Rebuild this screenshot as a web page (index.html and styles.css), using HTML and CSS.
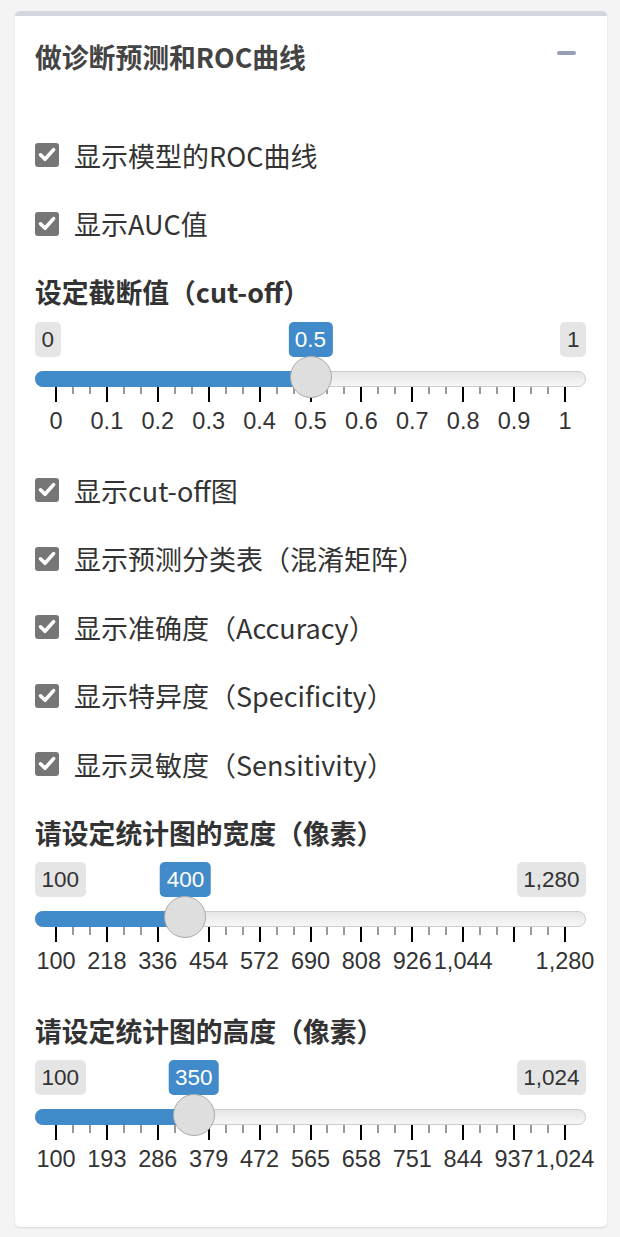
FILE: index.html
```html
<!DOCTYPE html>
<html lang="zh-CN">
<head>
    <meta charset="UTF-8">
    <meta name="viewport" content="width=device-width, initial-scale=1.0">
    <title>做诊断预测和ROC曲线</title>
    <link rel="stylesheet" href="styles.css">
</head>
<body>
    <div class="box">
        <div class="box-header">
            <h3 class="box-title">做诊断预测和ROC曲线</h3>
            <span class="collapse-btn"></span>
        </div>

        <div class="box-body">
            <label class="check"><span class="cb"><svg viewBox="0 0 24 24"><path d="M5.5 11.8 L10 16.3 L18.6 6.6"/></svg></span>显示模型的ROC曲线</label>
            <label class="check"><span class="cb"><svg viewBox="0 0 24 24"><path d="M5.5 11.8 L10 16.3 L18.6 6.6"/></svg></span>显示AUC值</label>

            <div class="field-label">设定截断值（cut-off）</div>
            <div class="irs" data-min="0" data-max="1" data-value="0.5" data-from="0.5" data-lo="0" data-hi="1"
                 data-grid="0|0.1|0.2|0.3|0.4|0.5|0.6|0.7|0.8|0.9|1"></div>

            <label class="check"><span class="cb"><svg viewBox="0 0 24 24"><path d="M5.5 11.8 L10 16.3 L18.6 6.6"/></svg></span>显示cut-off图</label>
            <label class="check"><span class="cb"><svg viewBox="0 0 24 24"><path d="M5.5 11.8 L10 16.3 L18.6 6.6"/></svg></span>显示预测分类表（混淆矩阵）</label>
            <label class="check"><span class="cb"><svg viewBox="0 0 24 24"><path d="M5.5 11.8 L10 16.3 L18.6 6.6"/></svg></span>显示准确度（Accuracy）</label>
            <label class="check"><span class="cb"><svg viewBox="0 0 24 24"><path d="M5.5 11.8 L10 16.3 L18.6 6.6"/></svg></span>显示特异度（Specificity）</label>
            <label class="check"><span class="cb"><svg viewBox="0 0 24 24"><path d="M5.5 11.8 L10 16.3 L18.6 6.6"/></svg></span>显示灵敏度（Sensitivity）</label>

            <div class="field-label">请设定统计图的宽度（像素）</div>
            <div class="irs" data-min="100" data-max="1280" data-value="400" data-from="400" data-lo="100" data-hi="1,280"
                 data-grid="100|218|336|454|572|690|808|926|1,044||1,280"></div>

            <div class="field-label">请设定统计图的高度（像素）</div>
            <div class="irs last" data-min="100" data-max="1024" data-value="350" data-from="350" data-lo="100" data-hi="1,024"
                 data-grid="100|193|286|379|472|565|658|751|844|937|1,024"></div>
        </div>
    </div>

    <script>
        // build the ion.rangeSlider-like markup from data attributes
        function buildSlider(el) {
            const min = +el.dataset.min;
            const max = +el.dataset.max;
            const p = (+el.dataset.value - min) / (max - min);
            const labels = el.dataset.grid.split('|');
            const pos = `calc(${p} * (100% - 42px) + 21px)`;

            let html = '';
            html += `<div class="irs-labels"><span class="irs-min">${el.dataset.lo}</span><span class="irs-max">${el.dataset.hi}</span>`;
            html += `<span class="irs-single" style="left: ${pos}">${el.dataset.from}</span></div>`;
            html += `<div class="irs-track"><div class="irs-line"></div>`;
            html += `<div class="irs-bar" style="width: ${pos}"></div>`;
            html += `<div class="irs-handle" style="left: calc(${p} * (100% - 42px))"></div></div>`;

            html += '<div class="irs-grid">';
            const step = 100 / (labels.length - 1);
            labels.forEach((text, i) => {
                const left = i * step;
                html += `<span class="irs-pol" style="left: ${left}%"></span>`;
                if (i > 0) {
                    for (let k = 1; k <= 2; k++) {
                        html += `<span class="irs-pol small" style="left: ${left - step * k / 3}%"></span>`;
                    }
                }
                if (text) {
                    html += `<span class="irs-text" style="left: ${left}%">${text}</span>`;
                }
            });
            html += '</div>';

            el.innerHTML = html;
        }

        document.querySelectorAll('.irs').forEach(buildSlider);
    </script>
</body>
</html>
```

FILE: styles.css
```css
* {
    box-sizing: border-box;
}

body {
    margin: 0;
    background: #f4f4f4;
    font-family: "Noto Sans CJK SC", "Noto Sans", sans-serif;
    color: #333;
}

.box {
    margin: 11px 13px 10px 15px;
    background: #fff;
    border-top: 5px solid #d2d6de;
    border-radius: 5px;
    box-shadow: 0 1px 2px rgba(0, 0, 0, 0.12);
}

.box-header {
    display: flex;
    align-items: center;
    justify-content: space-between;
    padding: 22px 31px 0 20px;
}

.box-title {
    margin: 0;
    font-size: 26.8px;
    font-weight: bold;
    line-height: 38px;
    color: #444;
}

.collapse-btn {
    width: 19px;
    height: 4px;
    margin-top: -8px;
    background: #97a0b3;
    border-radius: 2px;
}

.box-body {
    display: flex;
    flex-direction: column;
    padding: 60px 21px 57px 20px;
}

.check {
    display: flex;
    align-items: center;
    gap: 15px;
    height: 38px;
    margin-bottom: 30.5px;
    font-size: 27px;
}

.cb {
    width: 24px;
    height: 24px;
    background: #767676;
    border-radius: 3px;
    flex-shrink: 0;
}

.cb svg {
    display: block;
    width: 24px;
    height: 24px;
}

.cb path {
    fill: none;
    stroke: #fff;
    stroke-width: 3.6;
    stroke-linecap: round;
    stroke-linejoin: round;
}

.field-label {
    height: 38px;
    line-height: 38px;
    margin-bottom: 10.5px;
    font-size: 26.8px;
    font-weight: bold;
}

/* slider */
.irs {
    position: relative;
    height: 110px;
    margin-bottom: 39.5px;
    font-family: "Liberation Sans", Arial, sans-serif;
}

.irs.last {
    margin-bottom: 0;
}

.irs-labels {
    display: flex;
    justify-content: space-between;
    height: 35px;
}

.irs-min, .irs-max, .irs-single {
    font-size: 22.5px;
    line-height: 35px;
    padding: 0 6.5px;
    border-radius: 5px;
    white-space: nowrap;
}

.irs-min, .irs-max {
    background: rgba(0, 0, 0, 0.1);
    color: #333;
}

.irs-single {
    position: absolute;
    top: 0;
    transform: translateX(-50%);
    background: #428bca;
    color: #fff;
}

.irs-track {
    position: relative;
    height: 16px;
    margin-top: 14px;
}

.irs-line {
    height: 100%;
    border: 1px solid #ccc;
    border-radius: 8px;
    background: linear-gradient(to bottom, #dedede -50%, #fff 150%);
}

.irs-bar {
    position: absolute;
    left: 0;
    top: 0;
    height: 100%;
    background: #428bca;
    border-radius: 8px 0 0 8px;
}

.irs-handle {
    position: absolute;
    top: -15px;
    z-index: 2;
    width: 42px;
    height: 42px;
    border: 1.5px solid #ababab;
    background: #dedede;
    border-radius: 50%;
}

.irs-grid {
    position: relative;
    height: 45px;
    margin: 0 21px;
}

.irs-pol {
    position: absolute;
    top: 0;
    width: 2px;
    height: 15px;
    margin-left: -1px;
    background: #000;
}

.irs-pol.small {
    height: 7.5px;
    background: #999;
}

.irs-text {
    position: absolute;
    top: 22px;
    line-height: 24px;
    font-size: 23.5px;
    color: #333;
    white-space: nowrap;
    transform: translateX(-50%);
}
```
